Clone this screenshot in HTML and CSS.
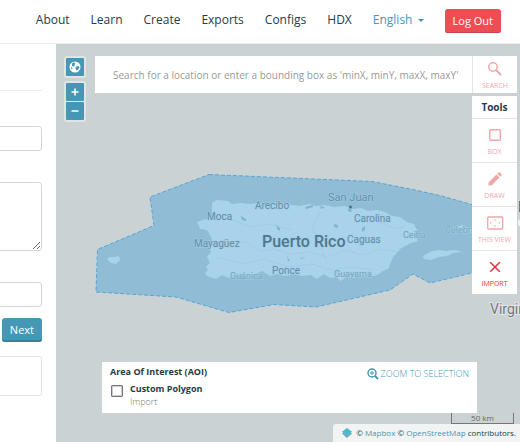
FILE: index.html
```html
<!DOCTYPE html>
<html lang="en">
<head>
<meta charset="utf-8">
<title>Create Export</title>
<link rel="stylesheet" href="styles.css">
</head>
<body>
<header class="header">
  <nav class="nav">
    <a href="#">About</a>
    <a href="#">Learn</a>
    <a href="#">Create</a>
    <a href="#">Exports</a>
    <a href="#">Configs</a>
    <a href="#">HDX</a>
    <a href="#" class="language">English <span class="caret"></span></a>
  </nav>
  <button class="btn btn-danger" type="button">Log Out</button>
</header>
<main class="layout">
  <aside class="sidebar">
    <form class="form">
      <hr class="rule">
      <input class="field" type="text" aria-label="Name">
      <textarea class="field area" aria-label="Description"></textarea>
      <input class="field" type="text" aria-label="Project">
      <button class="btn btn-primary" type="button">Next</button>
      <div class="panel"></div>
    </form>
  </aside>
  <section class="map">
    <svg class="canvas" viewBox="56 44 464 398" preserveAspectRatio="xMinYMin slice" role="img" aria-label="Map of Puerto Rico">
      <path class="aoi" d="M209 174.500L372 181.500L410 189L440 195.500L484 208V270L430 283L413 274L390 290L316 307L274 304.500L229 312.500L176 297L96 292L97.500 249.500L154 225.500L150 197Z"/>
      <path class="land" d="M212 203L217 200L228 201L232 204L241 203L249 204L259 203L272 204L281 203L291 205L300 206L309 204L316 206L324 205L334 207L345 206L352 209L361 208L368 211L377 210L385 212L392 216L400 217L407 222L414 224L417 230L416 237L418 241L411 243L405 246L400 249L397 253L393 257L390 264L389 268L383 271L377 275L368 277L360 276L353 278L346 277L341 281L336 277L330 278L324 274L317 279L311 275L302 276L293 274L285 276L277 274L270 276L262 271L254 275L246 277L239 275L229 278L222 275L216 279L207 276L205 273L208 270L206 267L210 263L207 257L211 252L209 246L212 240L210 235L207 230L200 229L197 222L206 219L212 216Z"/>
      <path class="land" d="M107 259L110 257L114 257L119 256L120 260L116 264L111 263ZM423 256L430 252L438 250L445 251L455 250L462 252L453 253L447 256L439 257L431 260L424 259ZM455 227L463 225L471 230L476 228L475 234L466 232Z"/>
      <path class="relief" d="M241 216l5 3v2l-4-1zM276 224l4 4v3l-3-2zM334 224l4 1v3l-4-1zM362 228l3-2v4l-3 2zM348 208l4 2l-1 2l-3-1zM320 206l5 1l-4 2zM287 256l3 5h-2zM300 258l6-1l-5 2zM305 207l8-2v2l-7 2z"/>
      <path class="ridge" d="M213 241l17 5l14-5l16 10l14-2l15 5l20-2l18 5l19-7l17 5l18-6l17 3M218 257l25 7l20-5l26 8l23-3l19 6l22-3l20 3M320 212l-8 15l8 17l7 20M380 223l13 5l12-1M230 219l20 8l19-3l22 6"/>
      <path class="islet" d="M518 219l4 3v6l-4-3z"/>
      <path class="edge-label" d="M519 201h3v11h-3z"/>
      <circle class="city-dot" cx="350.500" cy="207" r="1.500"/>
      <g class="labels">
        <text class="country" x="262" y="247">Puerto Rico</text>
        <text class="city" x="328" y="201">San Juan</text>
        <text x="207" y="220">Moca</text>
        <text x="194" y="247">Mayagüez</text>
        <text x="255" y="209">Arecibo</text>
        <text x="354" y="222">Carolina</text>
        <text x="347" y="243">Caguas</text>
        <text x="272" y="274">Ponce</text>
        <text class="minor" x="230" y="279">Guánica</text>
        <text class="minor" x="334" y="277">Guayama</text>
        <text class="minor" x="403" y="238">Ceiba</text>
        <text class="minor" x="445" y="233">Culebra</text>
        <text class="region" x="490" y="314">Virgin</text>
      </g>
    </svg>

    <div class="map-controls">
      <div class="control-group">
        <button type="button" aria-label="World extent">
          <svg width="12" height="12" viewBox="0 0 12 12"><circle cx="6" cy="6" r="5.500" fill="#fff"/><path d="M3 2.500l2-1.200l1.500.7l-1 1l.5 1l-1.500 1.500l-1.500-.5zM7 5.500l2.500-.5l1 1.500l-1.500 2.500l-1.500.5l-1-2zM2 6l1.500 1l-.5 1.500l-1-1z" fill="#4498b5"/></svg>
        </button>
      </div>
      <div class="control-group">
        <button type="button" aria-label="Zoom in"><svg width="8" height="8" viewBox="0 0 8 8"><path d="M4 .5v7M.5 4h7" stroke="#fff" stroke-width="1.500"/></svg></button>
        <button type="button" aria-label="Zoom out"><svg width="8" height="8" viewBox="0 0 8 8"><path d="M.5 4h7" stroke="#fff" stroke-width="1.500"/></svg></button>
      </div>
    </div>

    <div class="search">
      <input type="text" aria-label="Search" placeholder="Search for a location or enter a bounding box as 'minX, minY, maxX, maxY'">
      <button class="tool" type="button">
        <svg width="16" height="16" viewBox="0 0 16 16"><circle cx="6" cy="6" r="4.200" fill="none" stroke="currentColor" stroke-width="1.500"/><path d="M9 9l5 5" stroke="currentColor" stroke-width="2"/></svg>
        <span>SEARCH</span>
      </button>
    </div>

    <div class="tools">
      <h2>Tools</h2>
      <button class="tool" type="button">
        <svg width="16" height="16" viewBox="0 0 16 16"><rect x="2.700" y="2.700" width="10.600" height="10.600" rx="1" fill="none" stroke="currentColor" stroke-width="1.500"/></svg>
        <span>BOX</span>
      </button>
      <button class="tool" type="button">
        <svg width="16" height="16" viewBox="0 0 16 16"><path d="M1.500 14.500v-3L9.500 3.500l3 3l-8 8zM10.300 2.700l1.200-1.200q.6-.5 1.200 0l1.800 1.800q.5.600 0 1.200l-1.200 1.200z" fill="currentColor"/></svg>
        <span>DRAW</span>
      </button>
      <button class="tool" type="button">
        <svg width="18" height="16" viewBox="0 0 18 16"><rect x="1.700" y="2" width="15" height="12" rx="1" fill="none" stroke="currentColor" stroke-width="1.300"/><path d="M9 4l1.300 1.500H7.700zM9 12l1.300-1.500H7.700zM3.700 8l1.500-1.300v2.600zM14.300 8l-1.500-1.300v2.600z" fill="currentColor"/></svg>
        <span>THIS VIEW</span>
      </button>
      <button class="tool active" type="button">
        <svg width="16" height="16" viewBox="0 0 16 16"><path d="M3.200 3.200l9.600 9.600M12.800 3.200l-9.600 9.600" stroke="currentColor" stroke-width="1.500"/></svg>
        <span>IMPORT</span>
      </button>
    </div>

    <div class="aoi-card">
      <div class="aoi-info">
        <h2>Area Of Interest (AOI)</h2>
        <div class="aoi-row">
          <input type="checkbox" id="custom-polygon">
          <label for="custom-polygon">
            <strong>Custom Polygon</strong>
            <span>Import</span>
          </label>
        </div>
      </div>
      <a href="#" class="zoom-link">
        <svg width="12" height="12" viewBox="0 0 12 12"><circle cx="5" cy="5" r="4" fill="none" stroke="currentColor" stroke-width="1.500"/><path d="M8 8l3 3" stroke="currentColor" stroke-width="2"/><path d="M5 3v4M3 5h4" stroke="currentColor"/></svg>
        ZOOM TO SELECTION
      </a>
    </div>

    <div class="map-footer">
      <div class="scale">50 km</div>
      <div class="attribution">
        <svg width="10" height="10" viewBox="0 0 10 10"><path d="M5 2l5 3.500L5 10L0 5.500z" fill="#7da6b5"/><path d="M5 0l5 3.700L5 8L0 3.700z" fill="#49bccd"/></svg>
        <span>© <a href="#">Mapbox</a> © <a href="#">OpenStreetMap</a> contributors.</span>
      </div>
    </div>
  </section>
</main>
</body>
</html>
```
FILE: styles.css
```css
* { box-sizing: border-box; }

body {
  margin: 0;
  min-height: 100vh;
  display: flex;
  flex-direction: column;
  overflow: hidden;
  background: #fff;
  color: #233c47;
  font: 12px/16px "Open Sans", sans-serif;
}

a { color: #4498b5; text-decoration: none; }
button { font-family: inherit; cursor: pointer; }
h2, p { margin: 0; }

.header {
  display: flex;
  justify-content: flex-end;
  align-items: center;
  gap: 21px;
  padding: 9px 19px 10px 0;
  border-bottom: 1px solid #eee;
}
.nav { display: flex; gap: 21px; padding-bottom: 2px; }
.nav a { color: #233c47; }
.nav .language { color: #4498b5; }
.caret {
  display: inline-block;
  margin-left: 2px;
  vertical-align: 2px;
  border: 3px solid transparent;
  border-top-color: currentColor;
  border-bottom: 0;
}

.btn {
  height: 24px;
  padding: 0 8px;
  border: 0;
  border-radius: 3px;
  color: #fff;
  font-size: 11px;
  line-height: 16px;
}
.btn-danger { background: #ec4e54; box-shadow: inset 0 -1px #c5454c; }
.btn-primary { background: #4498b5; box-shadow: inset 0 -2px #39809a; }

.layout { flex: 1; display: flex; }

.sidebar { flex: 0 0 56px; display: flex; justify-content: flex-end; overflow: hidden; padding: 46px 14px 0 0; }
.form { flex: 0 0 240px; display: flex; flex-direction: column; align-items: stretch; }
.rule { width: 100%; height: 1px; margin: 0 0 35px; border: 0; background: #eee; }
.field {
  height: 25px;
  margin: 0 0 31px;
  border: 1px solid #d5d5d5;
  border-radius: 3px;
  background: #fff;
}
.area { height: 69px; resize: vertical; }
.form .btn { align-self: flex-end; margin: -20px 0 14px; }
.panel { height: 40px; border: 1px solid #e2e2e2; border-radius: 3px; }

.map { flex: 1; position: relative; overflow: hidden; background: #cad2d3; }
.canvas { position: absolute; inset: 0; width: 100%; height: 100%; }
.aoi { fill: #90bdd5; stroke: #57a5d5; stroke-width: 1; stroke-dasharray: 4 2; }
.land { fill: #a9d3ea; }
.relief { fill: #85b3cc; }
.ridge { fill: none; stroke: #a1cce3; stroke-width: 1; }
.islet { fill: #eef1f1; }
.edge-label { fill: #777; }
.city-dot { fill: #48718a; }
.labels { font: 10px Roboto, sans-serif; fill: #628ea8; stroke: #a3cde3; stroke-width: 1px; paint-order: stroke; }
.labels .country { font-size: 16px; font-weight: 500; fill: #4d7890; }
.labels .city { font-size: 11px; }
.labels .minor { font-size: 9px; fill: #77a6bf; }
.labels .region { font-size: 14px; fill: #73797b; stroke: #e2e6e6; stroke-width: 2px; }

.map-controls { position: absolute; top: 12px; left: 8px; display: grid; gap: 3px; }
.control-group { display: grid; gap: 1px; padding: 2px; border-radius: 3px; background: #dfe4e5; }
.control-group button {
  display: grid;
  place-items: center;
  width: 18px;
  height: 18px;
  padding: 0;
  border: 0;
  border-radius: 1px;
  background: #4498b5;
}

.search { position: absolute; top: 12px; left: 39px; right: 3px; height: 37px; display: flex; background: #fff; }
.search input {
  flex: 1;
  min-width: 0;
  padding: 0 0 0 18px;
  border: 0;
  background: none;
  color: #555;
  font: 10px/16px "Open Sans", sans-serif;
}
.search input::placeholder { color: #999; opacity: 1; }

.tool {
  display: flex;
  flex-direction: column;
  align-items: center;
  justify-content: flex-end;
  gap: 5px;
  width: 45px;
  height: 44px;
  padding: 0 0 6px;
  border: 0;
  border-top: 1px solid #e3e6e7;
  background: #fff;
  color: #f0a7a9;
  font-size: 7px;
  line-height: 8px;
  white-space: nowrap;
}
.tool.active { color: #d8363c; }
.search .tool { height: 37px; padding-bottom: 3px; border-top: 0; border-left: 1px solid #e3e6e7; }

.tools { position: absolute; top: 52px; right: 3px; width: 45px; background: #fff; }
.tools h2 { font-size: 10px; line-height: 22px; text-align: center; }

.aoi-card {
  position: absolute;
  left: 46px;
  right: 43px;
  bottom: 29px;
  display: flex;
  justify-content: space-between;
  align-items: flex-start;
  padding: 3px 8px 5px;
  background: #fff;
}
.aoi-card h2, .aoi-card strong { display: block; font-size: 9px; line-height: 14px; font-weight: 700; }
.aoi-row { display: flex; align-items: flex-start; gap: 7px; padding: 3px 0 0 1px; }
.aoi-row input {
  appearance: none;
  width: 12px;
  height: 12px;
  margin: 3px 0 0;
  border: 1px solid #777;
  border-radius: 1px;
  box-shadow: inset 0 0 0 1px #ccc;
}
.aoi-row span { display: block; color: #777; font-size: 9px; line-height: 12px; font-weight: 300; }
.zoom-link { display: flex; align-items: center; gap: 2px; padding-top: 1px; font-size: 9px; font-weight: 300; line-height: 16px; }

.map-footer { position: absolute; right: 0; bottom: 0; display: flex; flex-direction: column; align-items: flex-end; }
.scale {
  width: 63px;
  height: 11px;
  margin-right: 6px;
  border: 1px solid #777;
  border-top: 0;
  color: #666;
  font-size: 8px;
  line-height: 10px;
  text-align: center;
}
.attribution {
  display: flex;
  align-items: center;
  gap: 4px;
  height: 18px;
  padding: 0 4px 0 9px;
  border-top-left-radius: 3px;
  background: #f2f4f4;
  font-size: 8px;
}
```
